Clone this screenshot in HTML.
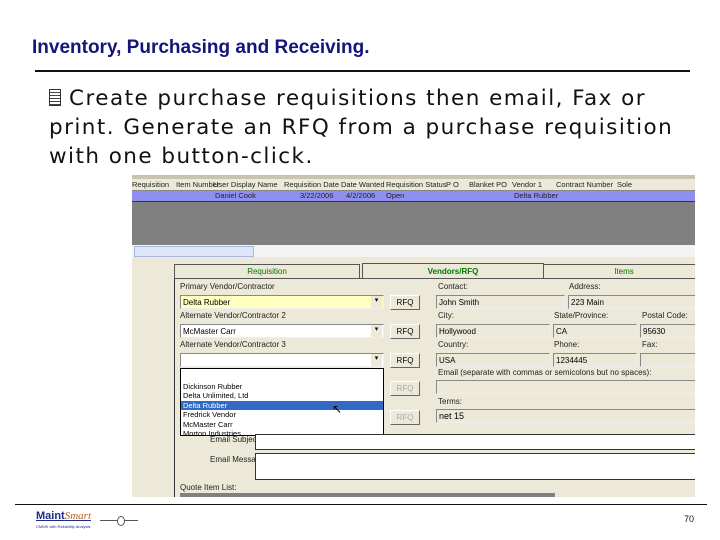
<!DOCTYPE html>
<html><head><style>
body{margin:0;width:720px;height:540px;background:#fff;position:relative;overflow:hidden;font-family:"Liberation Sans",sans-serif}
.a{position:absolute}
.t{font-size:8px;color:#222;white-space:nowrap}
.in{position:absolute;background:#ece9d8;border:1px solid #888;border-right-color:#eee;border-bottom-color:#eee;font-size:8px;padding-left:2px;box-sizing:border-box;line-height:13px}
.btn{position:absolute;width:30px;height:15px;border:1px solid #fff;border-right-color:#666;border-bottom-color:#666;background:#ece9d8;font-size:8px;text-align:center;line-height:14px;box-sizing:border-box}
</style></head><body>
<div class="a" style="left:32px;top:37px;font-size:19px;font-weight:bold;color:#14147a">Inventory, Purchasing and Receiving.</div>
<div class="a" style="left:35px;top:70px;width:655px;height:2px;background:#111"></div>
<div class="a" style="left:49px;top:84px;font-family:'DejaVu Sans',sans-serif;font-size:21.5px;letter-spacing:1.45px;line-height:29px;color:#111;width:660px">
<span style="display:inline-block;width:12px;height:17px;border:1px solid #333;box-sizing:border-box;background:repeating-linear-gradient(#fff 0 2px,#444 2px 3px);vertical-align:-1px;margin-right:8px"></span>Create purchase requisitions then email, Fax or print. Generate an RFQ from a purchase requisition with one button-click.</div>
<!-- screenshot -->
<div class="a" style="left:132px;top:175px;width:563px;height:322px;background:#ece9d8;overflow:hidden">
 <div class="a" style="left:0;top:0;width:563px;height:4px;background:#c8c4b0"></div>
 <div class="a t" style="left:0;top:4px;width:563px;height:11px;background:#ece9d8;border-bottom:1px solid #888;line-height:11px;font-size:7.5px">
 <span class="a" style="left:0">Requisition</span><span class="a" style="left:44px">Item Number</span><span class="a" style="left:81px">User Display Name</span><span class="a" style="left:152px">Requisition Date</span><span class="a" style="left:209px">Date Wanted</span><span class="a" style="left:254px">Requisition Status</span><span class="a" style="left:314px">P O</span><span class="a" style="left:337px">Blanket PO</span><span class="a" style="left:380px">Vendor 1</span><span class="a" style="left:424px">Contract Number</span><span class="a" style="left:485px">Sole</span></div>
 <div class="a t" style="left:0;top:16px;width:563px;height:10px;background:#8f8ff2;line-height:10px;font-size:7.5px;border-bottom:1px solid #333">
 <span class="a" style="left:83px">Daniel Cook</span><span class="a" style="left:168px">3/22/2006</span><span class="a" style="left:214px">4/2/2006</span><span class="a" style="left:254px">Open</span><span class="a" style="left:382px;">Delta Rubber</span></div>
 <div class="a" style="left:0;top:27px;width:563px;height:43px;background:#808080"></div>
 <div class="a" style="left:0;top:70px;width:563px;height:12px;background:#f4f4f4"></div>
 <div class="a" style="left:2px;top:71px;width:118px;height:9px;background:#dde6f8;border:1px solid #a8b8e0"></div>
 <div class="a" style="left:42px;top:89px;width:521px;height:233px;border-left:1px solid #333"></div>
 <div class="a" style="left:42px;top:89px;width:184px;height:14px;border:1px solid #555;border-bottom:none;font-size:8px;color:#070;text-align:center;line-height:14px">Requisition</div>
 <div class="a" style="left:230px;top:88px;width:180px;height:15px;border:1px solid #555;border-bottom:none;font-size:8px;color:#070;text-align:center;line-height:15px;font-weight:bold">Vendors/RFQ</div>
 <div class="a" style="left:411px;top:89px;width:160px;height:14px;border:1px solid #555;border-bottom:none;font-size:8px;color:#070;text-align:center;line-height:14px">Items</div>
 <div class="a" style="left:42px;top:103px;width:521px;height:1px;background:#555"></div>
 <div class="a t" style="left:48px;top:107px">Primary Vendor/Contractor</div>
 <div class="in" style="left:48px;top:120px;width:204px;height:14px;background:#ffffc0">Delta Rubber</div>
 <div class="a t" style="left:48px;top:136px">Alternate Vendor/Contractor 2</div>
 <div class="in" style="left:48px;top:149px;width:204px;height:14px;background:#fff">McMaster Carr</div>
 <div class="a t" style="left:48px;top:165px">Alternate Vendor/Contractor 3</div>
 <div class="in" style="left:48px;top:178px;width:204px;height:14px;background:#fff"></div>
 <div class="a" style="left:239px;top:121px;width:11px;height:12px;background:#ece9d8;font-size:7px;text-align:center">▾</div>
 <div class="a" style="left:239px;top:150px;width:11px;height:12px;background:#ece9d8;font-size:7px;text-align:center">▾</div>
 <div class="a" style="left:239px;top:179px;width:11px;height:12px;background:#ece9d8;font-size:7px;text-align:center">▾</div>
 <div class="a" style="left:48px;top:193px;width:204px;height:68px;background:#fff;border:1px solid #000;box-sizing:border-box;font-size:7.5px;line-height:9.4px;padding-top:13px;overflow:hidden">
  <div style="padding-left:2px">Dickinson Rubber</div><div style="padding-left:2px">Delta Unlimited, Ltd</div><div style="padding-left:2px;background:#316ac5;color:#fff">Delta Rubber</div><div style="padding-left:2px">Fredrick Vendor</div><div style="padding-left:2px">McMaster Carr</div><div style="padding-left:2px">Morton Industries</div></div>
 <div class="btn" style="left:258px;top:120px">RFQ</div>
 <div class="btn" style="left:258px;top:149px">RFQ</div>
 <div class="btn" style="left:258px;top:178px">RFQ</div>
 <div class="btn" style="left:258px;top:206px;color:#aaa">RFQ</div>
 <div class="btn" style="left:258px;top:235px;color:#aaa">RFQ</div>
 <div class="a t" style="left:306px;top:107px">Contact:</div><div class="a t" style="left:437px;top:107px">Address:</div>
 <div class="in" style="left:304px;top:120px;width:129px;height:14px">John Smith</div>
 <div class="in" style="left:436px;top:120px;width:140px;height:14px">223 Main</div>
 <div class="a t" style="left:306px;top:136px">City:</div><div class="a t" style="left:422px;top:136px">State/Province:</div><div class="a t" style="left:510px;top:136px">Postal Code:</div>
 <div class="in" style="left:304px;top:149px;width:114px;height:14px">Hollywood</div>
 <div class="in" style="left:421px;top:149px;width:84px;height:14px">CA</div>
 <div class="in" style="left:508px;top:149px;width:60px;height:14px">95630</div>
 <div class="a t" style="left:306px;top:165px">Country:</div><div class="a t" style="left:422px;top:165px">Phone:</div><div class="a t" style="left:510px;top:165px">Fax:</div>
 <div class="in" style="left:304px;top:178px;width:114px;height:14px">USA</div>
 <div class="in" style="left:421px;top:178px;width:84px;height:14px">1234445</div>
 <div class="in" style="left:508px;top:178px;width:60px;height:14px"></div>
 <div class="a t" style="left:306px;top:193px">Email (separate with commas or semicolons but no spaces):</div>
 <div class="in" style="left:304px;top:205px;width:270px;height:14px"></div>
 <div class="a t" style="left:306px;top:222px">Terms:</div>
 <div class="in" style="left:304px;top:234px;width:270px;height:14px;font-size:9px">net 15</div>
 <div class="a t" style="left:78px;top:260px">Email Subject:</div>
 <div class="a" style="left:123px;top:259px;width:450px;height:14px;background:#fff;border:1px solid #333;border-right:none"></div>
 <div class="a t" style="left:78px;top:280px">Email Message</div>
 <div class="a" style="left:123px;top:278px;width:450px;height:25px;background:#fff;border:1px solid #333;border-right:none"></div>
 <div class="a t" style="left:48px;top:308px">Quote Item List:</div>
 <div class="a" style="left:48px;top:318px;width:375px;height:4px;background:#808080"></div>
 <div class="a" style="left:200px;top:228px;font-size:12px;line-height:12px">↖</div>
</div>
<div class="a" style="left:15px;top:504px;width:692px;height:1px;background:#111"></div>
<div class="a" style="left:36px;top:510px;font-size:11px;font-weight:bold;color:#1c2c8a;text-decoration:underline">Maint<span style="font-family:'Liberation Serif',serif;font-style:italic;font-weight:normal;color:#c06020">Smart</span></div>
<div class="a" style="left:36px;top:524px;font-size:4px;color:#1c2c8a">CMMS with Reliability Analysis</div>
<div class="a" style="left:100px;top:520px;width:38px;height:1px;background:#555"></div>
<div class="a" style="left:117px;top:516px;width:6px;height:8px;border:1px solid #555;border-radius:50%;background:#fff"></div>
<div class="a" style="left:684px;top:514px;font-size:9px;color:#111">70</div>
</body></html>
